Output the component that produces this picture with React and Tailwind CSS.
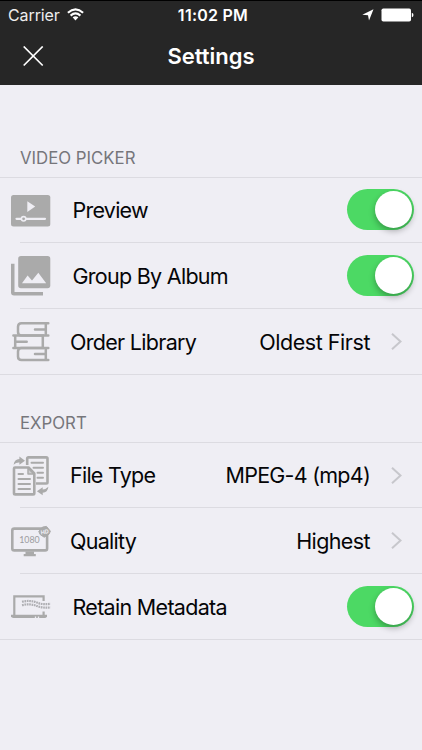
import React from "react";

const GREY = "#aaaaaa";

function PreviewIcon() {
  return (
    <svg width="40" height="40" viewBox="0 0 40 40">
      <rect x="0" y="4" width="39.3" height="31.5" rx="2.5" fill={GREY} />
      <path d="M16.3 10.3 24.2 15.6 16.3 20.9Z" fill="#efeef4" />
      <path d="M5.5 27.8H34" stroke="#efeef4" strokeWidth="2.2" strokeLinecap="round" />
      <circle cx="12.6" cy="27.8" r="2.2" fill={GREY} stroke="#efeef4" strokeWidth="1.6" />
    </svg>
  );
}

function AlbumIcon() {
  return (
    <svg width="40" height="40" viewBox="0 0 40 40" fill={GREY}>
      <path d="M0 7.8H3.5V36H32V39.5H3Q0 39.5 0 36.5Z" />
      <path
        fillRule="evenodd"
        d="M10 0H36.5Q39.3 0 39.3 2.8V29.5Q39.3 32.3 36.5 32.3H10Q7.2 32.3 7.2 29.5V2.8Q7.2 0 10 0ZM11 27.3H35.2L27.3 16.8 21 24.4 16.6 19.6Z"
      />
    </svg>
  );
}

function BooksIcon() {
  return (
    <svg width="40" height="40" viewBox="0 0 40 40" fill="none" stroke={GREY} strokeWidth="2.5" strokeLinecap="round">
      <path d="M37.3 1.3H10.5Q7 1.3 7 4.8V10Q7 13.5 10.5 13.5H37.3M34.8 1.3V13.5M24 7.4H34.8" />
      <path d="M2.4 13.5H31.8V26H2.4M4.2 13.5V26M4.2 19.8H15.7" />
      <path d="M37.3 26H10.5Q7 26 7 29.5V34.5Q7 38 10.5 38H37.3M34.8 26V38M24 32H34.8" />
    </svg>
  );
}

function FilesIcon() {
  return (
    <svg width="40" height="40" viewBox="0 0 40 40" fill="none" stroke={GREY} strokeWidth="2.6" strokeLinejoin="round">
      <path d="M16.2 9V2.6Q16.2 1.4 17.4 1.4H35.3Q36.5 1.4 36.5 2.6V26.3Q36.5 27.5 35.3 27.5H25" />
      <path d="M20.5 6.8H32M22.5 11.8H32M26.5 16.8H32M26.5 21.8H32" strokeWidth="2" strokeLinecap="round" />
      <path d="M4 11.5H17.5L23.3 17.4V37.2Q23.3 38.4 22.1 38.4H4.2Q3 38.4 3 37.2V12.6Q3 11.5 4 11.5Z" />
      <path d="M17 11.7V18H23Z" fill={GREY} fillOpacity=".5" strokeWidth="1.5" />
      <path d="M7.5 18H12M7.5 23H19M7.5 28H19M7.5 33H19" strokeWidth="2" strokeLinecap="round" />
      <path d="M2.6 8.8Q3.4 3.2 8.4 3.1V.6L14 4.7 8.4 8.7V6.4Q5 6.2 2.6 8.8Z" fill={GREY} stroke="none" />
      <path d="M37.4 30.8Q36.7 36.7 31.7 36.8V39.3L25.9 35.2 31.7 31.2V33.6Q34.8 33.5 37.4 30.8Z" fill={GREY} stroke="none" />
    </svg>
  );
}

function MonitorIcon() {
  return (
    <svg width="40" height="40" viewBox="0 0 40 40">
      <rect x="1.3" y="7.6" width="34.8" height="21.8" rx="2" fill="none" stroke={GREY} strokeWidth="2.6" />
      <path d="M14.5 30.5H23V33H24.8V35.2H12.7V33H14.5Z" fill={GREY} />
      <text x="8.2" y="22" fontSize="9.8" fill="#9c9ca0" textLength="20.5" lengthAdjust="spacingAndGlyphs" className="font-['Lato',sans-serif]">1080</text>
      <path d="M27.8 10.5 31.5 6.1 35.5 5.4 39.4 10.2 38 13.2 33.2 16.2 29.2 13.6Z" fill={GREY} stroke={GREY} strokeLinejoin="round" />
      <text x="29.7" y="12.8" fontSize="5.5" fontWeight="700" fill="#efeef4" transform="rotate(-8 34 11)" className="font-['Inter',sans-serif]">HD</text>
    </svg>
  );
}

function LaptopIcon() {
  return (
    <svg width="40" height="40" viewBox="0 0 40 40" fill="none">
      <path d="M3.3 28.5V9.3H32.6V14M32.6 24.5V28" stroke={GREY} strokeWidth="2.2" />
      <path d="M0 27.8H36V29.2Q35.5 31.1 33.5 31.1H2.5Q.4 30.9 0 29.2Z" fill={GREY} />
      <path d="M24.5 31.2V29.6M27.5 31.2V29.6" stroke="#efeef4" strokeWidth="1.3" />
      <g stroke="#aeaeb2" strokeWidth="2.2" strokeDasharray="1.7 .7">
        <path d="M11 14.8Q19 12.8 26 15.6 32 18 39.5 16.8" />
        <path d="M11 18.2Q19 16.2 26 19 32 21.4 39.5 20.4" />
      </g>
    </svg>
  );
}

function Toggle() {
  return (
    <div className="mr-[8px] mb-[2px] flex h-[41px] w-[67px] shrink-0 items-center justify-end rounded-full bg-[#4cd964] pr-[2px]">
      <div className="size-[37px] rounded-full bg-white shadow-[0_3px_6px_rgba(0,0,0,0.3)]" />
    </div>
  );
}

function Row({ icon, label, tracking, value, valueTracking, height, lift = "", last }) {
  return (
    <div className={`relative flex items-center ${height}`}>
      <div className="ml-[11px] w-10 shrink-0">{icon}</div>
      <div className={`flex-1 whitespace-nowrap ${value ? "pl-[19px]" : "pl-[21.5px]"} ${tracking} ${lift}`}>{label}</div>
      {value ? (
        <>
          <span className={`whitespace-nowrap ${valueTracking} ${lift}`}>{value}</span>
          <svg className="mr-[19px] ml-[20px]" width="13" height="20" viewBox="0 0 13 20" fill="none">
            <path d="M2 1.7 10.5 9.5 2 17.3" stroke="#c7c7cc" strokeWidth="2" />
          </svg>
        </>
      ) : (
        <Toggle />
      )}
      <div className={`absolute right-0 bottom-0 h-px bg-[#dcdbe1] ${last ? "left-0" : "left-[20px]"}`} />
    </div>
  );
}

export default function App() {
  return (
    <div className="flex h-[750px] w-[422px] flex-col overflow-hidden bg-[#efeef4] font-['Inter',sans-serif] text-[21.5px] leading-[26px] text-[#050507]">
      <header className="h-[85px] shrink-0 border-t border-black bg-[#262626] text-white">
        <div className="grid h-[28px] grid-cols-3 items-center text-[16px] leading-5">
          <div className="flex items-center pl-[8px]">
            <span className="tracking-[-0.1px] text-[#eeeeee]">Carrier</span>
            <svg className="ml-[7px] mb-[2px]" width="17" height="13" viewBox="0 0 17 13" fill="none" stroke="white" strokeWidth="2.1">
              <path d="M.9 4.7Q8.5-2 16.1 4.7M3.6 7.6Q8.5 3.3 13.4 7.6" />
              <path d="M5.6 9.3Q8.5 7 11.4 9.3L8.5 12.5Z" fill="white" stroke="none" />
            </svg>
          </div>
          <div className="pl-[4px] text-center font-semibold tracking-[0.25px] whitespace-nowrap">11:02 PM</div>
          <div className="flex items-center justify-end pr-[8px]">
            <svg width="12" height="12" viewBox="0 0 12 12"><path d="M11.5.3 7 11.5 6 6.2.3 5.8Z" fill="white" /></svg>
            <svg className="ml-[7px]" width="33" height="14" viewBox="0 0 33 14" fill="white">
              <rect x=".5" y=".5" width="29.5" height="13" rx="1.8" />
              <path d="M30.8 4.8Q32.5 5 32.5 7T30.8 9.2Z" />
            </svg>
          </div>
        </div>
        <div className="grid h-[54px] grid-cols-[66px_1fr_66px] items-center">
          <svg className="ml-[23px]" width="21" height="21" viewBox="0 0 21 21" stroke="white" strokeWidth="1.7">
            <path d="M.7.5 19.7 19.5M19.7.5.7 19.5" />
          </svg>
          <h1 className="text-center text-[22px] font-semibold tracking-[0px]">Settings</h1>
        </div>
      </header>
      <h2 className="flex h-[93px] shrink-0 items-end border-b border-[#dcdbe1] pb-[9px] pl-[20px] text-[16.8px] leading-5 tracking-[0px] text-[#76767b]">VIDEO PICKER</h2>
      <Row height="h-[65px]" lift="pb-[2px]" icon={<PreviewIcon />} label="Preview" tracking="tracking-[-0.75px]" />
      <Row height="h-[66px]" icon={<AlbumIcon />} label="Group By Album" tracking="tracking-[-0.72px]" />
      <Row height="h-[66px]" icon={<BooksIcon />} label="Order Library" tracking="tracking-[-0.7px]" value="Oldest First" valueTracking="tracking-[-0.45px]" last />
      <h2 className="flex h-[68px] shrink-0 items-end border-b border-[#dcdbe1] pb-[9px] pl-[20px] text-[16.8px] leading-5 tracking-[0px] text-[#76767b]">EXPORT</h2>
      <Row height="h-[65px]" lift="pb-[2px]" icon={<FilesIcon />} label="File Type" tracking="tracking-[-0.75px]" value="MPEG-4 (mp4)" valueTracking="tracking-[-0.75px]" />
      <Row height="h-[66px]" icon={<MonitorIcon />} label="Quality" tracking="tracking-[-0.72px]" value="Highest" valueTracking="tracking-[-0.6px]" />
      <Row height="h-[66px]" icon={<LaptopIcon />} label="Retain Metadata" tracking="tracking-[-0.7px]" last />
    </div>
  );
}
